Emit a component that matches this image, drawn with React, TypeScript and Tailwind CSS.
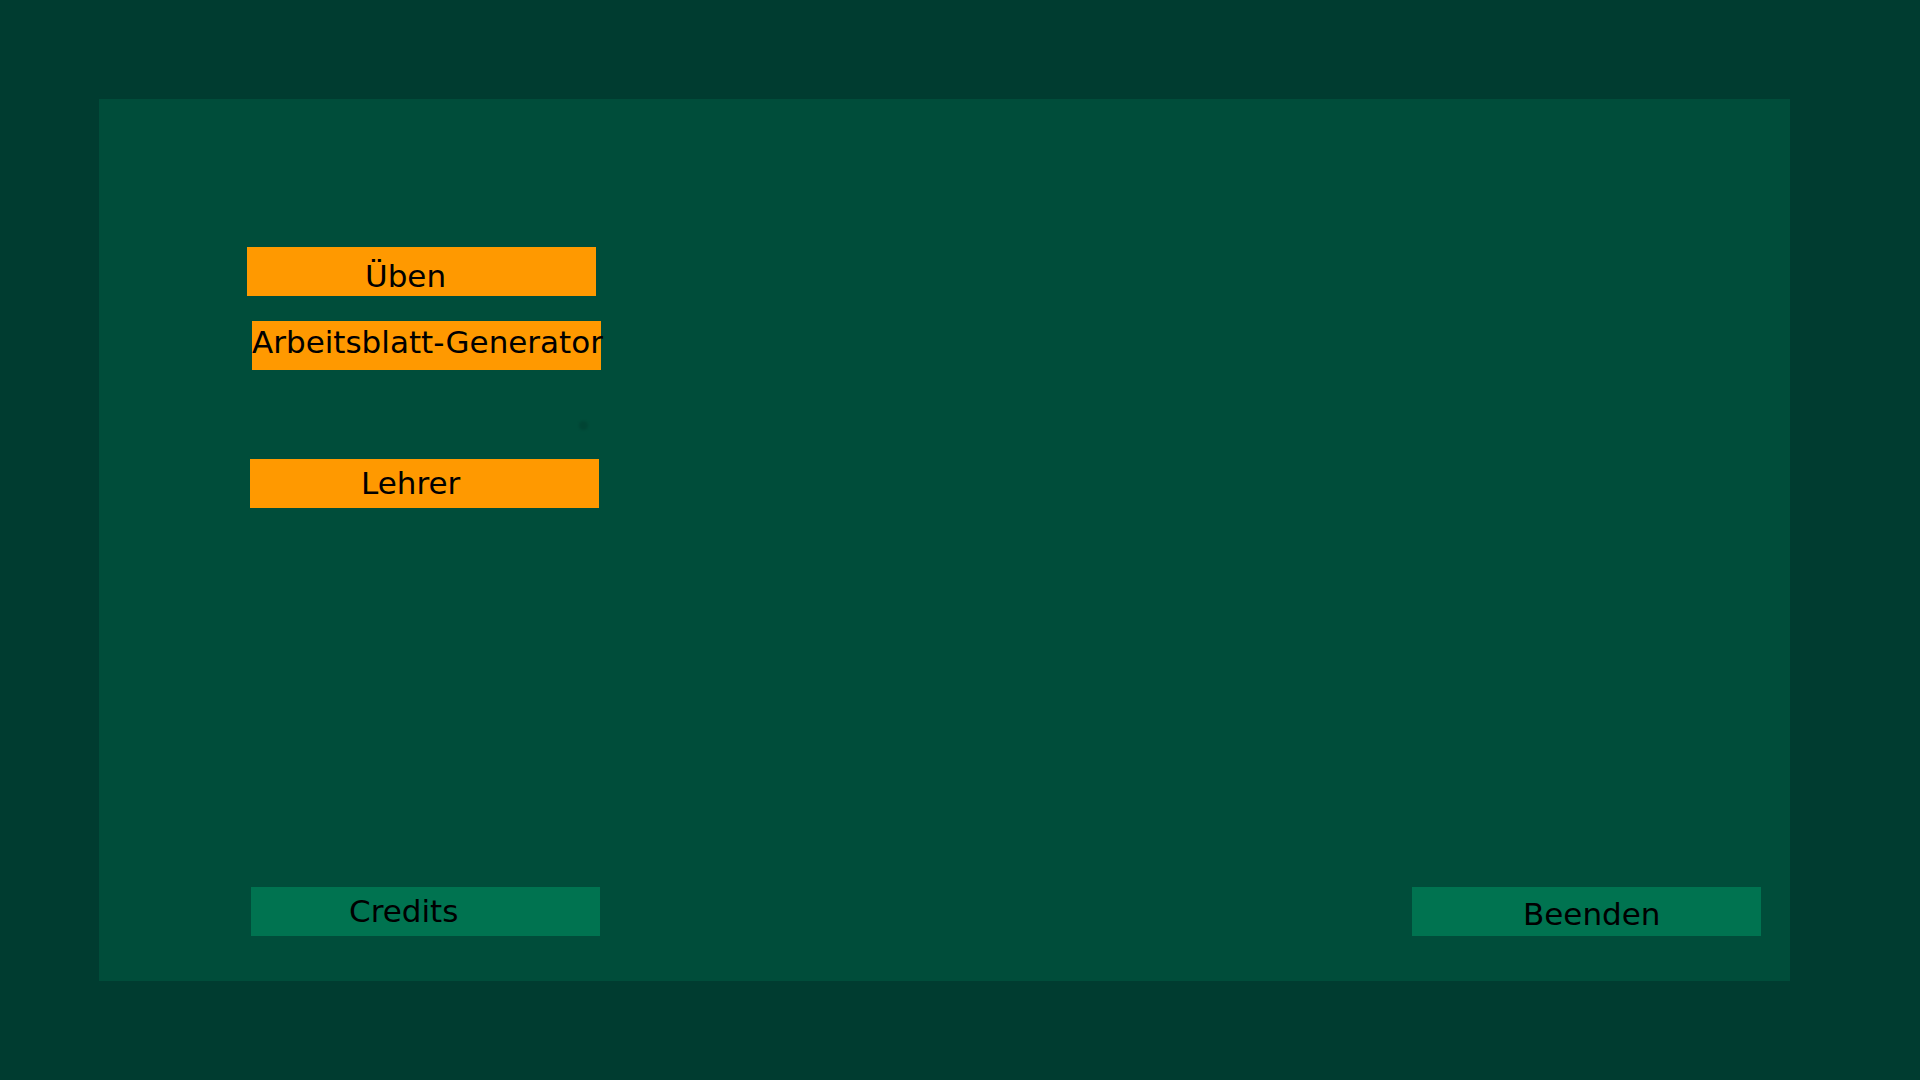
import React from "react";

const font = { fontFamily: '"DejaVu Sans", Verdana, sans-serif' };

function Btn({
  label,
  className,
}: {
  label: string;
  className: string;
}) {
  return (
    <div
      className={`flex items-start whitespace-nowrap text-[31px] leading-none text-black ${className}`}
    >
      {label}
    </div>
  );
}

export default function App() {
  return (
    <div
      className="w-[1920px] h-[1080px] bg-[#003c30] pt-[99px] pl-[99px] overflow-hidden"
      style={font}
    >
      <div className="relative w-[1691px] h-[882px] bg-[#004d3a] flex flex-col pt-[148px] pb-[45px]">
        <Btn
          label="Üben"
          className="ml-[148px] w-[349px] h-[49px] bg-[#ff9900] pl-[118px] pt-[14px]"
        />
        <Btn
          label="Arbeitsblatt-Generator"
          className="ml-[153px] mt-[25px] w-[349px] h-[49px] bg-[#ff9900] pl-0 pt-[6px]"
        />
        <div className="absolute left-[480px] top-[322px] w-[9px] h-[9px] rounded-full bg-[#003f30] opacity-60 blur-[1px]" />
        <Btn
          label="Lehrer"
          className="ml-[151px] mt-[89px] w-[349px] h-[49px] bg-[#ff9900] pl-[111px] pt-[9px]"
        />
        <div className="mt-auto flex justify-between items-end pl-[152px] pr-[29px]">
          <Btn
            label="Credits"
            className="w-[349px] h-[49px] bg-[#007350] pl-[98px] pt-[9px]"
          />
          <Btn
            label="Beenden"
            className="w-[349px] h-[49px] bg-[#007350] pl-[111px] pt-[12px]"
          />
        </div>
      </div>
    </div>
  );
}
